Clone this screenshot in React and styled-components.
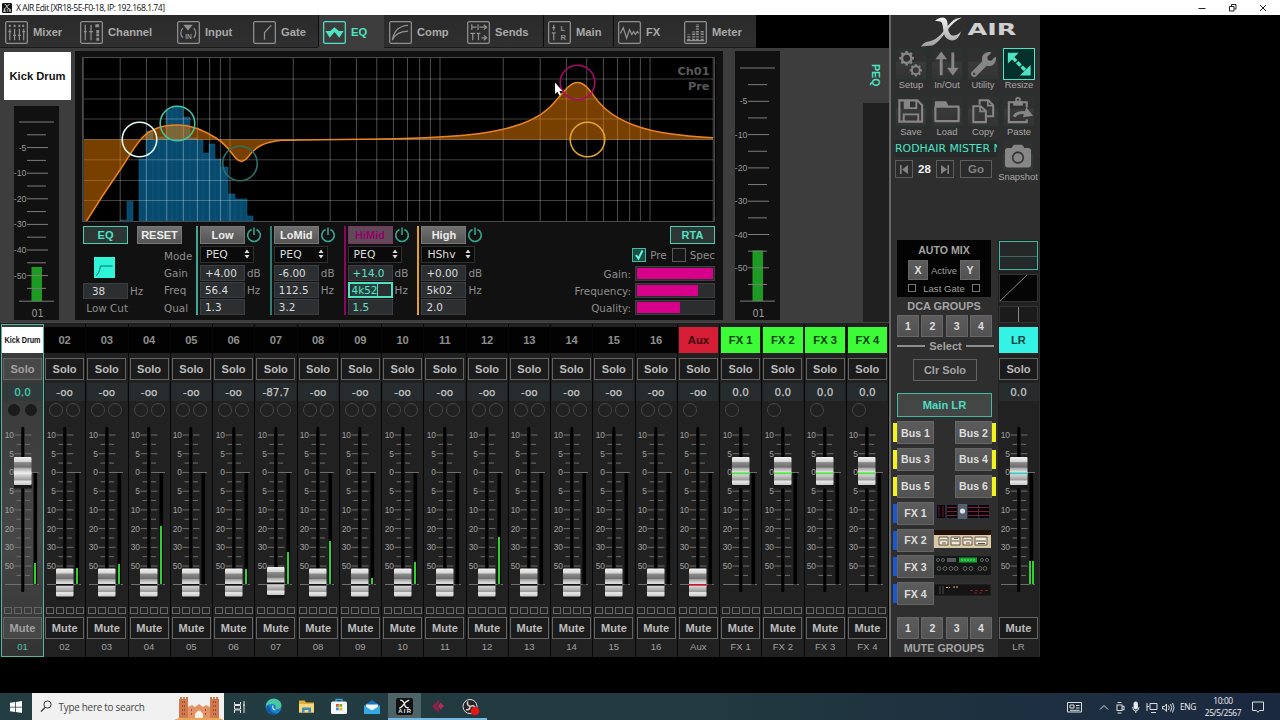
import React from 'react';
import styled, { createGlobalStyle } from 'styled-components';
import { FaWrench, FaCamera } from 'react-icons/fa';

const teal = '#4fe3c4';
const tealDim = '#3aa893';
const magenta = '#d6008a';
const amber = '#e0a030';

const GlobalStyle = createGlobalStyle`
	* {
		box-sizing: border-box;
	}
	body {
		margin: 0;
		background: #000;
		overflow: hidden;
		font-family: 'Liberation Sans', Arial, sans-serif;
	}
	svg {
		display: block;
		flex: none;
	}
`;

/* ---------- data ---------- */

const tabs = [
	{ name: 'Mixer', width: 75 },
	{ name: 'Channel', width: 97 },
	{ name: 'Input', width: 76 },
	{ name: 'Gate', width: 70 },
	{ name: 'EQ', width: 66, active: true },
	{ name: 'Comp', width: 78 },
	{ name: 'Sends', width: 81 },
	{ name: 'Main', width: 70, divided: true },
	{ name: 'FX', width: 66, divided: true },
	{ name: 'Meter', width: 77 },
];

const bands = [
	{ name: 'Low', color: tealDim, mode: 'PEQ', gain: '+4.00', freq: '56.4', qual: '1.3' },
	{ name: 'LoMid', color: '#2c7f72', mode: 'PEQ', gain: '-6.00', freq: '112.5', qual: '3.2' },
	{ name: 'HiMid', color: '#8c0660', mode: 'PEQ', gain: '+14.0', freq: '4k52', qual: '1.5', selected: true },
	{ name: 'High', color: amber, mode: 'HShv', gain: '+0.00', freq: '5k02', qual: '2.0' },
];

const levels = { '01': 563, '02': 568, '03': 564, '04': 526, '06': 569, '07': 552, '08': 541, '09': 578, '10': 562, '12': 537 };

const channels = [...Array(16)].map((_, i) => {
	const id = String(i + 1).padStart(2, '0');
	return { id, name: id, value: '-oo', fader: 167, level: levels[id], dots: 2, cap: '#111' };
});
channels[0] = { ...channels[0], name: 'Kick Drum', value: '0.0', fader: 55.5, selected: true, cap: '#eee' };
channels[6] = { ...channels[6], value: '-87.7', fader: 165.5 };

const strips = [
	...channels,
	{ id: 'Aux', name: 'Aux', value: '-oo', fader: 167, dots: 1, cap: '#c8142c', bg: '#d51d36', fg: '#3b0008' },
	...[1, 2, 3, 4].map((n) => ({
		id: `FX ${n}`,
		name: `FX ${n}`,
		value: '0.0',
		fader: 55.5,
		dots: 1,
		cap: '#48e83c',
		bg: '#3dfb37',
		fg: '#04400a',
	})),
];

/* ---------- window frame ---------- */

const Screen = styled.div`
	width: 1280px;
	height: 720px;
	display: flex;
	flex-direction: column;
	background: #000;
	overflow: hidden;
`;

const TitleBar = styled.div`
	height: 15px;
	flex: none;
	display: flex;
	align-items: center;
	background: #fff;
	padding: 0 13px 0 2px;
	font-family: 'Open Sans', sans-serif;
	font-size: 8.6px;
	letter-spacing: -0.5px;
	color: #111;
	gap: 4px;
	white-space: nowrap;
`;

const WindowButtons = styled.div`
	margin-left: auto;
	display: flex;
	gap: 22.5px;
	align-items: center;
`;

const Mixer = styled.div`
	display: flex;
	width: 1040px;
	height: 642px;
	flex: none;
	background: #2e2e2e;
`;

const MainArea = styled.div`
	width: 889px;
	display: flex;
	flex-direction: column;
	background: #1d1d1d;
`;

/* ---------- tabs ---------- */

const TabBar = styled.div`
	display: flex;
	height: 33px;
	background: #000;
`;

const Tab = styled.div`
	width: ${(p) => p.$width}px;
	display: flex;
	align-items: center;
	gap: 5px;
	padding-left: 5px;
	padding-top: 2px;
	font-size: 11.2px;
	font-weight: bold;
	color: ${(p) => (p.$active ? teal : '#a9a9a9')};
	background: ${(p) => (p.$active ? '#3c3c3c' : 'linear-gradient(#2a2a2a, #2f2f2f)')};
	box-shadow: ${(p) => (p.$divided || p.$active ? 'inset 1px 0 0 #0c0c0c' : 'none')};
	border-bottom: 1px solid ${(p) => (p.$active ? '#3c3c3c' : '#1a1a1a')};
`;

/* ---------- editor panel ---------- */

const Editor = styled.div`
	display: flex;
	height: 274px;
	background: #3d3d3d;
	padding: 3px 0 1px 4px;
`;

const ChannelColumn = styled.div`
	width: 71px;
	display: flex;
	flex-direction: column;
`;

const ChannelName = styled.div`
	width: 67px;
	height: 48px;
	margin-top: 1px;
	background: #fff;
	color: #111;
	display: flex;
	align-items: center;
	justify-content: center;
	font-size: 11.2px;
	font-weight: bold;
`;

const MeterBox = styled.div`
	width: 45px;
	background: #111;
	margin: ${(p) => p.$margin};
	height: ${(p) => p.$height}px;
`;

const EqPanel = styled.div`
	width: 648px;
	height: 269px;
	padding: 6px 0 0 7px;
	background: #111;
	display: flex;
	flex-direction: column;
`;

const Controls = styled.div`
	display: flex;
	margin-top: 4px;
	padding-left: 1px;
	width: 633px;
	font-family: 'DejaVu Sans', Verdana, sans-serif;
	font-size: 10.4px;
	color: #8e8e8e;
`;

const CutColumn = styled.div`
	width: 54px;
	display: flex;
	flex-direction: column;
`;

const PanelButton = styled.div`
	width: 45px;
	height: 18px;
	flex: none;
	display: flex;
	align-items: center;
	justify-content: center;
	font-family: 'Liberation Sans', Arial, sans-serif;
	font-size: 11px;
	font-weight: bold;
	color: ${(p) => (p.$on ? teal : p.$hot ? '#960068' : '#ececec')};
	background: ${(p) => (p.$on ? '#2d3634' : p.$hot ? '#5f4b58' : 'linear-gradient(#707070, #545454)')};
	border: 1px solid ${(p) => (p.$on ? '#52c9b1' : p.$hot ? '#7b3163' : '#777')};
`;

const CutIcon = styled.div`
	width: 21px;
	height: 21px;
	margin: 13px 0 4px 11px;
	background: #2ff5d8;
`;

const FieldRow = styled.div`
	display: flex;
	align-items: center;
	gap: 2px;
	height: 17px;
	white-space: nowrap;
`;

const Field = styled.div`
	width: 45px;
	height: 16px;
	flex: none;
	padding-left: ${(p) => (p.$focus ? 2 : p.$indent || 4)}px;
	line-height: ${(p) => (p.$focus ? 12 : 14)}px;
	background: #2c2f31;
	border: ${(p) => (p.$focus ? `2px solid ${teal}` : '1px solid #3b3e40')};
	color: ${(p) => (p.$hot ? '#5fe0c6' : '#dcdcdc')};
`;

const Selection = styled.span`
	display: inline-block;
	height: 12px;
	background: #26423f;
	border-right: 1px solid ${teal};
`;

const LabelColumn = styled.div`
	width: 59px;
	display: flex;
	flex-direction: column;
`;

const Labels = styled.div`
	padding: 4px 0 0 27px;
	line-height: 17.2px;
	display: flex;
	flex-direction: column;
`;

const Band = styled.div`
	width: 73.8px;
	height: 89px;
	border-left: 2px solid ${(p) => p.$color};
	padding-left: 2px;
	display: flex;
	flex-direction: column;
`;

const BandHead = styled.div`
	display: flex;
	align-items: center;
	gap: 1px;
	height: 18px;
`;

const Select = styled.div`
	width: 54px;
	height: 17px;
	margin: 2px 0;
	padding: 0 3px 0 5px;
	display: flex;
	align-items: center;
	justify-content: space-between;
	background: #0a0a0a;
	border: 1px solid #2f2f2f;
	color: #dedede;
	font-size: 10.8px;
`;

const RtaColumn = styled.div`
	margin-left: auto;
	display: flex;
	flex-direction: column;
	align-items: flex-end;
`;

const CheckRow = styled.div`
	display: flex;
	align-items: center;
	height: 21px;
	gap: 4px;
`;

const CheckBox = styled.div`
	width: 14px;
	height: 14px;
	border: 1px solid ${(p) => (p.$on ? '#49b8a3' : '#5a5a5a')};
	background: ${(p) => (p.$on ? '#1c4d45' : '#161616')};
	margin-left: ${(p) => (p.$on ? 0 : 1)}px;
`;

const BarTrack = styled.div`
	width: 80px;
	height: 15px;
	padding: 1px;
	background: #2b2d2f;
	border: 1px solid #3b3d3f;
	margin-left: 2px;
`;

const BarFill = styled.div`
	height: 100%;
	background: ${magenta};
`;

const SideTabs = styled.div`
	width: 26px;
	margin: -3px 0 -1px auto;
	display: flex;
	flex-direction: column;
`;

const SideTab = styled.div`
	height: 55px;
	padding: 16px 5px 0 0;
	writing-mode: vertical-rl;
	font-size: 10.6px;
	font-weight: bold;
	line-height: 16px;
	color: ${teal};
`;

const SideFill = styled.div`
	flex: 1;
	background: #202020;
`;

/* ---------- channel strips ---------- */

const StripRow = styled.div`
	display: flex;
	height: 335px;
	padding: 1px 0 0 1px;
	border-top: 1px solid #454545;
`;

const Strip = styled.div`
	width: ${(p) => (p.$selected ? 43 : 42.25)}px;
	height: 333px;
	flex: none;
	padding-top: ${(p) => (p.$selected ? 2 : 3)}px;
	display: flex;
	flex-direction: column;
	align-items: center;
	background: ${(p) => (p.$selected ? 'linear-gradient(#3a3a3a 20%, #474747 65%, #333)' : '#212121')};
	border: ${(p) => (p.$selected ? '1px solid #4db8a4' : 'none')};
	border-right: 1px solid ${(p) => (p.$selected ? '#4db8a4' : '#060606')};
`;

const StripName = styled.div`
	width: ${(p) => p.$width || '100%'};
	height: 26px;
	flex: none;
	background: ${(p) => p.$bg || '#020202'};
	color: ${(p) => p.$fg || '#8e8e8e'};
	font-size: 11.2px;
	font-weight: bold;
	display: flex;
	align-items: center;
	justify-content: center;
	white-space: nowrap;
`;

const Narrow = styled.span`
	font-size: 9px;
	transform: scaleX(0.8);
`;

const StripButton = styled.div`
	width: 39px;
	height: 22px;
	flex: none;
	margin-top: ${(p) => p.$top}px;
	display: flex;
	align-items: center;
	justify-content: center;
	font-size: 11.1px;
	font-weight: bold;
	color: ${(p) => (p.$dim ? '#a2a2a2' : '#bdbdbd')};
	border: 1px solid #636363;
	background: ${(p) => (p.$dim ? '#474747' : '#1b1b1b')};
`;

const StripValue = styled.div`
	width: 40px;
	height: 18px;
	flex: none;
	margin-top: 3px;
	display: flex;
	align-items: center;
	justify-content: center;
	background: ${(p) => (p.$on ? '#303a3b' : '#262b2d')};
	color: ${(p) => (p.$on ? '#45cdb3' : '#c4c4c4')};
	-webkit-text-stroke: 0.25px currentColor;
	font-family: 'DejaVu Sans', Verdana, sans-serif;
	font-size: 10.4px;
`;

const Dots = styled.div`
	height: 16px;
	flex: none;
	width: 31px;
	padding-top: 2px;
	display: flex;
	gap: 3px;
`;

const Dot = styled.div`
	width: ${(p) => (p.$on ? 12 : 14)}px;
	height: ${(p) => (p.$on ? 12 : 14)}px;
	margin: ${(p) => (p.$on ? '1px' : 0)};
	border-radius: 50%;
	border: 1px solid ${(p) => (p.$on ? '#1b1b1b' : '#464646')};
	background: ${(p) => (p.$on ? '#1b1b1b' : 'transparent')};
`;

const Squares = styled.div`
	display: flex;
	gap: 2px;
	height: 7px;
	margin-top: 3px;
	flex: none;
`;

const Square = styled.div`
	width: 8px;
	height: 7px;
	border: 1px solid #666;
`;

const StripLabel = styled.div`
	font-size: 9.6px;
	line-height: 16px;
	color: ${(p) => (p.$on ? '#4fc3ae' : '#a0a0a0')};
`;

/* ---------- sidebar ---------- */

const Sidebar = styled.div`
	width: 151px;
	border-left: 2px solid #676767;
	display: flex;
	flex-direction: column;
	background: #2e2e2e;
`;

const SideTop = styled.div`
	height: 225px;
	display: flex;
	flex-direction: column;
	padding: 2px 0 0 2px;
`;

const ToolGrid = styled.div`
	display: grid;
	grid-template-columns: repeat(4, 36px);
	row-gap: 2px;
`;

const Tool = styled.div`
	display: flex;
	flex-direction: column;
	align-items: center;
	width: 36px;
	height: 45px;
	font-size: 9.4px;
	line-height: 10px;
	color: #a8a8a8;
	white-space: nowrap;
`;

const ToolIcon = styled.div`
	width: 32px;
	height: 32px;
	flex: none;
	display: flex;
	align-items: center;
	justify-content: center;
	color: ${(p) => (p.$active ? teal : '#868686')};
	background: ${(p) => (p.$active ? '#04302b' : 'linear-gradient(#303030 40%, #393939 45%, #333)')};
	border: 1px solid ${(p) => (p.$active ? teal : '#24352f')};
`;

const SceneArea = styled.div`
	display: flex;
	justify-content: space-between;
	width: 143px;
	padding-left: 2px;
`;

const SceneLeft = styled.div`
	width: 103px;
	display: flex;
	flex-direction: column;
`;

const SceneName = styled.div`
	height: 17px;
	width: 102px;
	overflow: hidden;
	white-space: nowrap;
	font-family: 'DejaVu Sans', Verdana, sans-serif;
	font-size: 10.9px;
	line-height: 17px;
	color: ${teal};
	background: #262a2a;
`;

const SceneRow = styled.div`
	display: flex;
	align-items: center;
	margin-top: 3px;
	font-size: 11.5px;
	font-weight: bold;
	color: #f4f4f4;
`;

const SceneButton = styled.div`
	width: ${(p) => p.$width}px;
	height: 18px;
	margin-right: ${(p) => p.$gap || 0}px;
	border: 1px solid #5d5d5d;
	background: #2b2b2b;
	color: #838383;
	display: flex;
	align-items: center;
	justify-content: center;
`;

const SceneNumber = styled.div`
	width: 23px;
	text-align: center;
`;

const SideBottom = styled.div`
	display: flex;
	height: 417px;
`;

const Groups = styled.div`
	width: 107px;
	display: flex;
	flex-direction: column;
	padding-left: 2px;
`;

const AutoMix = styled.div`
	width: 94px;
	height: 57px;
	margin-left: 4px;
	background: #030303;
	display: flex;
	flex-direction: column;
	align-items: center;
`;

const Heading = styled.div`
	width: 102px;
	text-align: center;
	font-size: ${(p) => p.$size || 10.9}px;
	font-weight: bold;
	line-height: ${(p) => p.$line || 18}px;
	color: #a4a4a4;
`;

const AutoRow = styled.div`
	display: flex;
	align-items: center;
	justify-content: space-between;
	width: 72px;
	height: ${(p) => p.$height}px;
	font-size: 9.6px;
	color: #a0a0a0;
`;

const SmallBox = styled.div`
	width: 8px;
	height: 8px;
	border: 1px solid #757575;
`;

const GroupButton = styled.div`
	width: ${(p) => p.$width || 22}px;
	height: ${(p) => p.$height || 22}px;
	display: flex;
	align-items: center;
	justify-content: center;
	font-size: 10.6px;
	font-weight: bold;
	color: #dedede;
	background: linear-gradient(#5c5c5c, #525252);
	border: 1px solid #666;
`;

const GroupRow = styled.div`
	display: flex;
	justify-content: space-between;
	width: 95px;
	margin-left: 4px;
`;

const SelectLine = styled.div`
	display: flex;
	align-items: center;
	justify-content: space-between;
	width: 97px;
	height: 18px;
	margin-left: 4px;
	font-size: 11px;
	font-weight: bold;
	color: #a4a4a4;

	&::before,
	&::after {
		content: '';
		width: 28px;
		height: 2px;
		background: #8e8e8e;
	}
`;

const ClearSolo = styled.div`
	width: 64px;
	height: 22px;
	margin: 4px 0 12px 20px;
	border: 1px solid #626262;
	color: #a2a2a2;
	font-size: 11px;
	font-weight: bold;
	display: flex;
	align-items: center;
	justify-content: center;
`;

const MainLr = styled.div`
	width: 95px;
	height: 24px;
	margin: 0 0 4px 4px;
	border: 1px solid #45b7a1;
	background: #424645;
	color: #4fdcc0;
	font-size: 11.2px;
	font-weight: bold;
	display: flex;
	align-items: center;
	justify-content: center;
`;

const BusRow = styled.div`
	display: flex;
	width: 103px;
	height: 26.9px;
	align-items: flex-start;
`;

const Marker = styled.div`
	width: 4px;
	height: 19px;
	margin-top: 2px;
	background: ${(p) => p.$color};
`;

const RackDrawing = styled.svg`
	margin-top: 1px;
`;

const Gap = styled.div`
	flex: 1;
`;

const MasterStrip = styled.div`
	width: 41px;
	height: 417px;
	background: #212121;
	display: flex;
	flex-direction: column;
	align-items: center;
	padding-top: 1px;
`;

const Thumb = styled.div`
	width: 39px;
	height: ${(p) => p.$height}px;
	margin-bottom: ${(p) => p.$gap}px;
	flex: none;
	overflow: hidden;
	background: ${(p) => p.$bg || '#050505'};
	border: 1px solid ${(p) => p.$line || '#333'};
`;

/* ---------- taskbar ---------- */

const Taskbar = styled.div`
	margin-top: auto;
	height: 27px;
	display: flex;
	align-items: center;
	background: linear-gradient(90deg, #233d42 0%, #21393f 55%, #1d3040 78%, #1b2940 100%);
`;

const StartButton = styled.div`
	width: 32px;
	display: flex;
	justify-content: center;
`;

const Search = styled.div`
	width: 192px;
	height: 27px;
	background: #f1f1f1;
	display: flex;
	align-items: center;
	padding: 0 0 0 8px;
	gap: 6.5px;
	font-family: 'Open Sans', sans-serif;
	font-size: 9.9px;
	letter-spacing: -0.25px;
	color: #444;
	white-space: nowrap;
`;

const Castle = styled.svg`
	margin-left: auto;
	margin-top: 3px;
`;

const TaskItem = styled.div`
	width: 32.9px;
	height: 27px;
	display: flex;
	align-items: center;
	justify-content: center;
	background: ${(p) => (p.$active ? '#4c6468' : 'transparent')};
	box-shadow: ${(p) => (p.$open ? 'inset 0 -2px 0 #78b8e0' : 'none')};
`;

const Tray = styled.div`
	margin-left: auto;
	padding-right: 16px;
	display: flex;
	align-items: center;
	font-family: 'Open Sans', sans-serif;
	font-size: 8.4px;
	color: #eee;
`;

const Language = styled.div`
	width: 18px;
	margin: 0 3px 0 4px;
	letter-spacing: -0.3px;
`;

const Clock = styled.div`
	width: 44px;
	margin-right: 7px;
	text-align: center;
	line-height: 12px;
	letter-spacing: -0.35px;
`;

/* ---------- drawings ---------- */

const tabIcons = {
	Mixer: (
		<>
			<path d='M4 5h2M9 5h2M14 5h2M18 5h2' strokeWidth='2.4' />
			<path d='M5 8v12M10 8v12M15 8v12M19.500 8v12M3.500 11h3M8.500 15h3M13.500 15h3M18 11h3' />
		</>
	),
	Channel: (
		<>
			<path d='M5.500 4v16M11.500 4v16M4 11h3M9.500 11h4' />
			<path d='M16 5h4M17 11h3M17 14.500h3M17 19h3' strokeWidth='3' />
		</>
	),
	Input: (
		<>
			<path d='M6.500 4h10l-5 6z' fill='currentColor' stroke='none' />
			<path d='M6 7.500q-4 5 0 10M17.500 7.500q4 5 0 10' />
			<text x='12' y='19' fontSize='7' fontWeight='bold' textAnchor='middle' fill='currentColor' stroke='none'>IN</text>
		</>
	),
	Gate: <path d='M12 19.500V12L19 4.500' />,
	EQ: <path d='M2.500 10.500h5L12 6.500l4.500 4h5L17 17.500l-5-6-5 6z' fill='currentColor' stroke='none' />,
	Comp: <path d='M3.500 20Q6 5 20 4.500M3.500 20Q7 11 20 10.500' />,
	Sends: (
		<path d='M5 3.500v6M5 6.500h5M11.500 3.500v6M13 6.500h7M17.500 4l3 2.500-3 2.500M3.500 13h5M6 13v7M10 13h4M12 13v7M15 17.500h5M17.500 15l3 2.500-3 2.500' />
	),
	Main: (
		<>
			<path d='M6 4v6M6 12v8M4 12.500h4M4.500 7h3' />
			<text x='15.500' y='10.500' fontSize='8' fontWeight='bold' textAnchor='middle' fill='currentColor' stroke='none'>L</text>
			<text x='16' y='20' fontSize='8' fontWeight='bold' textAnchor='middle' fill='currentColor' stroke='none'>R</text>
		</>
	),
	FX: <path d='M2.500 13l3-6 3.500 11 3-9 2.500 5 1.800-3 1.800 3 2-3 1.500 2' />,
	Meter: (
		<>
			<path d='M5 20v-6M10 20V11M14 20V3.500M19 20V9' strokeWidth='3.200' strokeDasharray='1.500 1.200' />
			<path d='M3 20.500h18' />
		</>
	),
};

function TabIcon({ name }) {
	return (
		<svg width='23' height='23' viewBox='0 0 24 24' fill='none' stroke='currentColor' strokeWidth='1.300' opacity={name === 'EQ' ? 1 : 0.8}>
			<rect x='0.700' y='0.700' width='22.600' height='22.600' rx='1.500' />
			{tabIcons[name]}
		</svg>
	);
}

function LevelMeter({ height, top, step, level }) {
	const bottom = top + step * 14;
	const marks = ['', '', '-5', '', '-10', '', '-20', '', '-30', '', '-40', '', '-50', ''];
	return (
		<svg width='45' height={height} fontFamily='Liberation Sans' fontSize='8.800' fill='#999'>
			<rect x='17.500' y={level} width='10.500' height={bottom - level} fill='#1c9a22' />
			{marks.map((mark, i) => {
				const y = top + step * i;
				const x1 = i === 0 ? 5 : 13;
				const x2 = i === 0 ? 40 : mark ? 34 : 32;
				return (
					<g key={i}>
						<path d={`M${x1} ${y}H${x2}`} stroke='#7c7c7c' />
						<text x='12.500' y={y + 3} textAnchor='end'>{mark}</text>
					</g>
				);
			})}
			<path d={`M5 ${bottom}H40`} stroke='#7c7c7c' />
			<text x='23.500' y={height - 3.5} fontFamily='DejaVu Sans' fontSize='9.600' textAnchor='middle'>01</text>
		</svg>
	);
}

const curve =
	'M86 222 C97 204 106 190 120 170 C127 160 133 148 142 138 C150 129 163 125 178 125 C192 125 205 131 216 138 C224 143 229 149 234 156 C239 162.500 243 163 248 157 C255 147 264 142 282 140.300 C300 139.500 340 139.500 380 139 C410 138.500 450 137.500 480 133.500 C510 129.500 535 121 549 108 C560 98 568 82.500 577.500 82.500 C587 82.500 592 95 600 103.500 C612 117 630 127 663 132.800 C680 135.500 700 137.300 713 137.700';

const rtaBars = [
	[120, 7, 220], [127, 6, 201.5], [139, 7, 159], [146, 7, 131], [153, 6, 140], [159, 7, 137], [166, 6, 110], [172, 5, 106],
	[177, 6, 107], [183, 7, 117], [190, 7, 138], [197, 6, 140], [203, 6, 153], [209, 6, 144], [215, 6, 159],
	[221, 7, 167], [228, 7, 194], [235, 6, 199], [241, 6, 199], [247, 6, 216],
];

function EqGraph() {
	const lines = [30, 40, 50, 60, 70, 80, 90, 100];
	[100, 1000].forEach((decade) => {
		for (let n = 2; n <= 10; n++) lines.push(decade * n);
	});
	lines.push(20000);
	return (
		<svg width='634' height='165' viewBox='82 57 634 165'>
			<rect x='82' y='57' width='634' height='165' fill='#000' />
			{rtaBars.map(([x, w, y]) => (
				<rect key={x} x={x} y={y} width={w} height={221 - y} fill='#084a6e' stroke='#0e5980' strokeWidth='0.600' />
			))}
			{lines.map((f) => (
				<path key={f} d={`M${230 + 210 * Math.log10(f / 100)} 58V221`} stroke='#fff' strokeOpacity='0.3' />
			))}
			{[79, 99, 119, 139.5, 159.8, 180.5, 200.5].map((y) => (
				<path key={y} d={`M84 ${y}H713`} stroke='#fff' strokeOpacity={y === 139.5 ? 0.35 : 0.25} />
			))}
			<path d={`${curve} V139.500 H83 V222 Z`} fill='#f08000' fillOpacity='0.5' />
			<path d={curve} fill='none' stroke='#e98525' strokeWidth='1.500' />
			<rect x='82.500' y='57.500' width='632' height='164' fill='none' stroke='#4a4a4a' />
			<path d='M83.500 58V221' stroke='#3b3b3b' />
			<g fill='none' strokeWidth='1.600'>
				<circle cx='139.500' cy='139.500' r='17.300' stroke='#dffcf4' />
				<circle cx='177.500' cy='123.500' r='17.300' stroke='#3fc4a0' />
				<circle cx='240' cy='163.500' r='17.300' stroke='#2b6f68' />
				<circle cx='577.500' cy='82.500' r='17.300' stroke='#ac0868' />
				<circle cx='587.500' cy='139.500' r='17.300' stroke='#e5a32f' />
			</g>
			<g fontFamily='DejaVu Sans' fontWeight='bold' fontSize='11.300' fill='#585858' textAnchor='end'>
				<text x='709.500' y='74.500'>Ch01</text>
				<text x='709.500' y='90'>Pre</text>
			</g>
			<path d='M555 82.500v11.500l2.500-2.200 1.800 3.700 1.800-.900-1.700-3.500h3z' fill='#fff' />
		</svg>
	);
}

function PowerIcon() {
	return (
		<svg width='16' height='16' viewBox='0 0 16 16' fill='none' stroke='#36a18c' strokeWidth='1.600'>
			<path d='M5.600 2.400A6.300 6.300 0 1 0 10.400 2.400M8 0.500V8' />
		</svg>
	);
}

function Fader({ y, level, cap, stereo }) {
	const labels = ['10', '5', '0', '5', '10', '20', '30', '50'];
	return (
		<svg width='42' height='187' fontFamily='Liberation Sans' fontSize='8.400' fill='#a0a0a0'>
			<defs>
				<linearGradient id='knob' x1='0' x2='0' y1='0' y2='1'>
					<stop offset='0' stopColor='#f2f2f2' />
					<stop offset='0.160' stopColor='#d6d6d6' />
					<stop offset='0.200' stopColor='#8a8a8a' />
					<stop offset='0.360' stopColor='#6f6f6f' />
					<stop offset='0.400' stopColor='#a8a8a8' />
					<stop offset='0.520' stopColor='#dcdcdc' />
					<stop offset='0.640' stopColor='#d2d2d2' />
					<stop offset='0.820' stopColor='#9a9a9a' />
					<stop offset='0.860' stopColor='#e9e9e9' />
					<stop offset='1' stopColor='#c9c9c9' />
				</linearGradient>
			</defs>
			{[...Array(16)].map((_, i) => {
				const ty = 18 + i * 9.36;
				return (
					<g key={i}>
						<path d={`M${i % 2 ? 14.5 : 12.5} ${ty}H19M23 ${ty}h${i % 2 ? 5 : 6.5}`} stroke='#6e6e6e' />
						{i % 2 === 0 && <text x='12' y={ty + 3} textAnchor='end'>{labels[i / 2]}</text>}
					</g>
				);
			})}
			<path d='M24 55.500H37M3 167.500H37' stroke='#6e6e6e' />
			<rect x='31.500' y='56' width='3.600' height='111.500' fill='#000' />
			<rect x='19.300' y='10' width='3' height='165' rx='1' fill='#000' />
			{level && <rect x={stereo ? 31 : 32} y={level - 417} width='2' height={584 - level} fill='#2fd32f' />}
			{level && stereo && <rect x='34' y={level - 417} width='2' height={584 - level} fill='#2fd32f' />}
			<rect x='12' y={y + 12} width='18' height='4' fill='#181818' />
			<rect x='12' y={y - 15.5} width='17.500' height='28' rx='1' fill='url(#knob)' />
			<rect x='12' y={y} width='17.500' height='1.700' fill={cap} />
		</svg>
	);
}

function Gear({ x, y, r }) {
	return (
		<g transform={`translate(${x} ${y})`}>
			<circle r={r} strokeWidth={r * 0.5} />
			{[0, 45, 90, 135, 180, 225, 270, 315].map((a) => (
				<path key={a} d={`M0 ${-r}V${-r * 1.55}`} strokeWidth={r * 0.52} transform={`rotate(${a})`} />
			))}
		</g>
	);
}

const toolDrawings = {
	Setup: (
		<>
			<Gear x={11} y={9.5} r={4.9} />
			<Gear x={20.5} y={22} r={4.1} />
		</>
	),
	'In/Out': (
		<>
			<path d='M9.500 27V8M21.500 3.500V22' strokeWidth='3' />
			<path d='M3.500 10.500l6-8 6 8zM15.500 19.500l6 8 6-8z' fill='currentColor' stroke='none' />
		</>
	),
	Resize: (
		<>
			<path d='M9 9l13 13' strokeWidth='3.500' strokeDasharray='5 1.500' />
			<path d='M4 4h11L4 15zM27.500 27.500h-11l11-11z' fill='currentColor' stroke='none' />
		</>
	),
	Save: (
		<>
			<path d='M5 4.500h17l5 5v17H3.500V4.500z' strokeWidth='2.200' />
			<path d='M9 4.500v8h12v-8M8 26v-7h15v7' strokeWidth='2' />
			<path d='M9.500 5h5v7h-5z' fill='currentColor' stroke='none' />
		</>
	),
	Load: (
		<>
			<path d='M3.500 11h24v15h-24zM4 11V6.500h10l2 4' strokeWidth='2.200' strokeLinejoin='round' />
			<path d='M4 6h10l2 4.500H4z' fill='currentColor' stroke='none' />
		</>
	),
	Copy: (
		<>
			<path d='M12 9V4.500h9l5 5V21h-7' strokeWidth='2.100' />
			<path d='M5.500 10.500h7.500l5.500 5V27h-13z' strokeWidth='2.100' />
			<path d='M12.500 10.500v5.500h6M20.500 4.500V10H26' strokeWidth='1.800' />
		</>
	),
	Paste: (
		<>
			<path d='M23.500 12V6.500H5V27h18.500v-3' strokeWidth='2.200' />
			<path d='M9.500 5.500h10v4.500h-10z' fill='currentColor' stroke='none' />
			<circle cx='14.500' cy='4' r='2' strokeWidth='1.700' />
			<path d='M10.500 21.500q3-6 13-4' strokeWidth='3.200' />
			<path d='M23 11.500L30 20.500l-10.500 1.500z' fill='currentColor' stroke='none' />
		</>
	),
};

function ToolButton({ name }) {
	return (
		<Tool>
			<ToolIcon $active={name === 'Resize'}>
				{name === 'Utility' && <FaWrench size={25} />}
				{name === 'Snapshot' && <FaCamera size={26} />}
				{toolDrawings[name] && (
					<svg width='30' height='30' viewBox='0 0 31 31' fill='none' stroke='currentColor'>
						{toolDrawings[name]}
					</svg>
				)}
			</ToolIcon>
			{name}
		</Tool>
	);
}

function Logo() {
	return (
		<svg width='143' height='31' viewBox='893 17 143 31'>
			<defs>
				<linearGradient id='chrome' gradientUnits='userSpaceOnUse' x1='0' x2='0' y1='17' y2='47'>
					<stop offset='0' stopColor='#f4f4f4' />
					<stop offset='1' stopColor='#9c9c9c' />
				</linearGradient>
			</defs>
			<path d='M935 21q3-3.500 8-3.500 4 .5 4.500 5.500 0 12 5.500 12.500 4 .5 8-4-2.500 9-9 9-7-.5-8.500-8.500-.5-6-1.500-9-1.500-2.500-7-2z' fill='url(#chrome)' />
			<path d='M962 17.500l-6 1.200q-5 2.300-12 12-7 10-18 11.300-4 2-5 4.500 6-.5 11.500-1 5.500-2.500 13-13 7.500-11 16.500-15z' fill='url(#chrome)' />
			<text x='967.500' y='34.700' fontFamily='DejaVu Sans' fontWeight='bold' fontSize='15' textLength='49' lengthAdjust='spacingAndGlyphs' fill='#d0d0d0'>AIR</text>
		</svg>
	);
}

function FxRack({ index }) {
	return (
		<RackDrawing width='57' height='19'>
			{index === 1 && (
				<>
					<rect width='57' height='17' fill='#2b2d37' />
					<path d='M3 2h8v13H3zM13 2h10v13H13zM34 2h10v13H34zM45 2h10v13H45z' fill='#0b0609' />
					<path d='M5 3v11M9 3v11' stroke='#651b2e' strokeWidth='1' />
					<path d='M13 4.500h10M13 8.500h10M13 12.500h10M34 4.500h21M34 8.500h21M34 12.500h21' stroke='#7b2036' />
					<rect x='24' y='1' width='9' height='15' fill='#555e6b' />
					<circle cx='28.500' cy='8' r='2.600' fill='#d9e3ec' />
				</>
			)}
			{index === 2 && (
				<>
					<rect width='57' height='18' fill='#d9caa8' />
					<rect width='57' height='5' fill='#231009' />
					<path d='M5 7h9v8H5zM17 7h9v8h-9zM29 7h9v8h-9zM41 7h12v8H41z' fill='#f1ead8' stroke='#62574a' />
					<path d='M6 10h7M18 11h7M30 10h7M42 11h10M8 13h4M20 8.500h4M32 13h4M44 13.500h7' stroke='#5a5045' />
				</>
			)}
			{index === 3 && (
				<>
					<rect width='57' height='19' fill='#151616' />
					<rect x='13' y='2' width='9' height='4' fill='#55585a' />
					<rect x='25' y='1.500' width='18' height='5' fill='#16a334' />
					<path d='M27 4h14' stroke='#62e36f' strokeDasharray='2 1' />
					<g fill='none' stroke='#777' strokeWidth='0.800'>
						{[5, 11, 17, 22, 31, 37, 46, 51].map((x) => <circle key={x} cx={x} cy='12.500' r='1.900' />)}
						{[4, 9, 48, 53].map((x) => <circle key={x} cx={x} cy='4' r='1.500' />)}
					</g>
				</>
			)}
			{index === 4 && (
				<>
					<rect width='57' height='12' y='1' fill='#151313' stroke='#3b3b3b' strokeWidth='0.600' />
					<path d='M6 3v8M9 3v8' stroke='#4e4e4e' />
					<path d='M12 4.500h4M19 4h5' stroke='#d7b15b' strokeDasharray='2 1' />
					<path d='M36 7.500h18M40 10h10' stroke='#73241d' strokeDasharray='3 2' />
				</>
			)}
		</RackDrawing>
	);
}

function ChannelStrip({ strip }) {
	const { selected } = strip;
	return (
		<Strip $selected={selected}>
			<StripName
				$bg={selected ? '#fff' : strip.bg}
				$fg={selected ? '#111' : strip.fg}
				$width={strip.bg ? '39.500px' : undefined}
			>
				{selected ? <Narrow>{strip.name}</Narrow> : strip.name}
			</StripName>
			<StripButton $top={5} $dim={selected}>Solo</StripButton>
			<StripValue $on={selected}>{strip.value}</StripValue>
			<Dots>
				{[...Array(strip.dots)].map((_, i) => <Dot key={i} $on={selected} />)}
			</Dots>
			<Fader y={strip.fader} level={strip.level} cap={strip.cap} />
			<Squares>
				{[0, 1, 2, 3].map((i) => <Square key={i} />)}
			</Squares>
			<StripButton $top={3} $dim={selected}>Mute</StripButton>
			<StripLabel $on={selected}>{strip.id}</StripLabel>
		</Strip>
	);
}

function EqControls() {
	return (
		<Controls>
			<CutColumn>
				<PanelButton $on>EQ</PanelButton>
				<CutIcon>
					<svg width='21' height='21' fill='none' stroke='#087062'>
						<path d='M2 18.500q3-1 4.500-9.500h12' />
					</svg>
				</CutIcon>
				<FieldRow>
					<Field $indent={8}>38</Field>Hz
				</FieldRow>
				<FieldRow>&nbsp;Low Cut</FieldRow>
			</CutColumn>
			<LabelColumn>
				<PanelButton>RESET</PanelButton>
				<Labels>
					<span>Mode</span>
					<span>Gain</span>
					<span>Freq</span>
					<span>Qual</span>
				</Labels>
			</LabelColumn>
			{bands.map((band) => (
				<Band key={band.name} $color={band.color}>
					<BandHead>
						<PanelButton $hot={band.selected}>{band.name}</PanelButton>
						<PowerIcon />
					</BandHead>
					<Select>
						{band.mode}
						<svg width='6' height='10' fill='#ddd'>
							<path d='M0.500 4L3 0.500 5.500 4zM0.500 6h5L3 9.500z' />
						</svg>
					</Select>
					<FieldRow>
						<Field $hot={band.selected}>{band.gain}</Field>dB
					</FieldRow>
					<FieldRow>
						<Field $hot={band.selected} $focus={band.selected}>
							{band.selected ? <Selection>{band.freq}</Selection> : band.freq}
						</Field>
						Hz
					</FieldRow>
					<FieldRow>
						<Field $hot={band.selected}>{band.qual}</Field>
					</FieldRow>
				</Band>
			))}
			<RtaColumn>
				<PanelButton $on>RTA</PanelButton>
				<CheckRow>
					<CheckBox $on>
						<svg width='12' height='12' fill='none' stroke='#6cf5da' strokeWidth='2'>
							<path d='M3 6l2.500 3.500L9.500 1.500' />
						</svg>
					</CheckBox>
					Pre
					<CheckBox />
					Spec
				</CheckRow>
				{[['Gain:', 76], ['Frequency:', 61], ['Quality:', 43]].map(([label, width]) => (
					<FieldRow key={label}>
						{label}
						<BarTrack>
							<BarFill style={{ width }} />
						</BarTrack>
					</FieldRow>
				))}
			</RtaColumn>
		</Controls>
	);
}

function SidePanel() {
	return (
		<Sidebar>
			<SideTop>
				<Logo />
				<ToolGrid>
					{['Setup', 'In/Out', 'Utility', 'Resize', 'Save', 'Load', 'Copy', 'Paste'].map((name) => (
						<ToolButton key={name} name={name} />
					))}
				</ToolGrid>
				<SceneArea>
					<SceneLeft>
						<SceneName>RODHAIR MISTER N</SceneName>
						<SceneRow>
							<SceneButton $width={18}>
								<svg width='10' height='9' fill='currentColor'><path d='M1 0h1.600v9H1zM9 0v9L3 4.500z' /></svg>
							</SceneButton>
							<SceneNumber>28</SceneNumber>
							<SceneButton $width={18} $gap={6}>
								<svg width='10' height='9' fill='currentColor'><path d='M7.400 0H9v9H7.400zM1 0v9l6-4.500z' /></svg>
							</SceneButton>
							<SceneButton $width={32}>Go</SceneButton>
						</SceneRow>
					</SceneLeft>
					<ToolButton name='Snapshot' />
				</SceneArea>
			</SideTop>
			<SideBottom>
				<Groups>
					<AutoMix>
						<Heading $size={10.6} $line={20}>AUTO MIX</Heading>
						<AutoRow $height={20}>
							<GroupButton $width={20} $height={20}>X</GroupButton>
							Active
							<GroupButton $width={20} $height={20}>Y</GroupButton>
						</AutoRow>
						<AutoRow $height={16}>
							<SmallBox />
							Last Gate
							<SmallBox />
						</AutoRow>
					</AutoMix>
					<Heading>DCA GROUPS</Heading>
					<GroupRow>
						{[1, 2, 3, 4].map((n) => <GroupButton key={n}>{n}</GroupButton>)}
					</GroupRow>
					<SelectLine>Select</SelectLine>
					<ClearSolo>Clr Solo</ClearSolo>
					<MainLr>Main LR</MainLr>
					{[1, 3, 5].map((n) => (
						<BusRow key={n}>
							<Marker $color='#f2f21c' />
							<GroupButton $width={37} $height={23}>Bus {n}</GroupButton>
							<Gap />
							<GroupButton $width={37} $height={23}>Bus {n + 1}</GroupButton>
							<Marker $color='#f2f21c' />
						</BusRow>
					))}
					{[1, 2, 3, 4].map((n) => (
						<BusRow key={n}>
							<Marker $color='#1b57cf' />
							<GroupButton $width={37} $height={23}>FX {n}</GroupButton>
							<FxRack index={n} />
						</BusRow>
					))}
					<Gap />
					<GroupRow>
						{[1, 2, 3, 4].map((n) => <GroupButton key={n}>{n}</GroupButton>)}
					</GroupRow>
					<Heading $size={10.8}>MUTE GROUPS</Heading>
				</Groups>
				<MasterStrip>
					<Thumb $height={29} $gap={4} $line='#47b5a0' $bg='#242828'>
						<svg width='37' height='27' stroke='#3d6a62'><path d='M0 14.500h37' /></svg>
					</Thumb>
					<Thumb $height={28} $gap={4}>
						<svg width='37' height='26' stroke='#888'><path d='M0 26L27 0' /></svg>
					</Thumb>
					<Thumb $height={17} $gap={4} $bg='#1b1b1b'>
						<svg width='37' height='15' stroke='#888'><path d='M18.500 0v15' strokeWidth='1' /></svg>
					</Thumb>
					<StripName $bg='#34f3e4' $fg='#08403c' $width='39px'>LR</StripName>
					<StripButton $top={5}>Solo</StripButton>
					<StripValue>0.0</StripValue>
					<Dots />
					<Fader y={55.5} level={561} cap='#35cfc8' stereo />
					<StripButton $top={13}>Mute</StripButton>
					<StripLabel>LR</StripLabel>
				</MasterStrip>
			</SideBottom>
		</Sidebar>
	);
}

function XAirMark({ size }) {
	return (
		<svg width={size} height={size} viewBox='0 0 16 16'>
			<rect width='16' height='16' rx='2' fill='#111' />
			<path d='M4 2q3 0 4 4t4 3M12.500 2Q9 3 6.500 7 5 9.500 3 9.500' fill='none' stroke='#eee' strokeWidth='1.300' />
			<text x='8' y='14.500' fontSize='5.500' fontWeight='bold' textAnchor='middle' textLength='12' fill='#eee'>AIR</text>
		</svg>
	);
}

function WindowsTaskbar() {
	return (
		<Taskbar>
			<StartButton>
				<svg width='12' height='12' fill='#fff'>
					<path d='M0 1.800L5.200 1v4.700H0zM6 .900L12 0v5.700H6zM0 6.400h5.200V11L0 10.200zM6 6.400h6V12l-6-.900z' />
				</svg>
			</StartButton>
			<Search>
				<svg width='12' height='13' fill='none' stroke='#333'>
					<circle cx='7.500' cy='4.500' r='3.600' />
					<path d='M5 7.500L1 11.500' strokeWidth='1.200' />
				</svg>
				Type here to search
				<Castle width='50' height='24' viewBox='0 0 50 24'>
					<path d='M0 24q10-5 25-3 15-2 25 3z' fill='#e8a55c' />
					<path d='M6 1h2v2h1V1h2v2h1V1h2v21H5V3h1zM36 1h2v2h1V1h2v2h1V1h2v2h1v19H36z' fill='#d1784d' />
					<path d='M14 11l4-2 3 2 4-3 4 3 3-2 4 2v11H14z' fill='#e29468' />
					<path d='M21 22v-4q4-7 8 0v4z' fill='#fff4e4' />
					<path d='M8 6h3M8 10h3M8 14h3M8 18h3M39 6h3M39 10h3M39 14h3M39 18h3M17 14h2M31 14h2M17 18h2M31 18h2' stroke='#873d2b' strokeWidth='1.500' strokeDasharray='1 1' />
				</Castle>
			</Search>
			<TaskItem>
				<svg width='12' height='12' fill='none' stroke='#e6e6e6'>
					<path d='M0.500 1v2.500h6V1M0.500 12V9h6v3M0.500 4.500h6v3.500h-6zM10 0v12M9 4h2' />
				</svg>
			</TaskItem>
			<TaskItem>
				<svg width='17' height='17' viewBox='0 0 17 17'>
					<circle cx='8.500' cy='8.500' r='8' fill='#1b7fd0' />
					<path d='M1 6q3-6 9-5.300 6.500 1.300 6.500 7-1 4-6 3.300 1.500-4-2.500-5Q4 5.500 1 8z' fill='#4ac6a0' />
					<path d='M5.500 9q-1 6 6 6.500Q5 18 2 13 0 9 4 6.500q-2 4 1.500 2.500z' fill='#145aa3' />
					<path d='M8 7.500q-1.500 3.500 2.500 4.500' fill='none' stroke='#bfe3ee' strokeWidth='1.200' />
				</svg>
			</TaskItem>
			<TaskItem>
				<svg width='15' height='13'>
					<path d='M0 0.500h5.500l1.500 2H15V12.500H0z' fill='#e3ae36' />
					<path d='M0 4h15v8.500H0z' fill='#f8d775' />
					<path d='M3 7.500h9v5H9.500V10h-4v2.500H3z' fill='#3d8cc8' />
				</svg>
			</TaskItem>
			<TaskItem>
				<svg width='16' height='17'>
					<path d='M5 4V1.500h6V4' fill='none' stroke='#3ba4dd' strokeWidth='1.300' />
					<rect y='3.500' width='16' height='12.500' rx='1.500' fill='#f4f6f7' />
					<rect x='5' y='6' width='2.800' height='2.800' fill='#e2512a' />
					<rect x='8.400' y='6' width='2.800' height='2.800' fill='#78b424' />
					<rect x='5' y='9.500' width='2.800' height='2.800' fill='#2a9be0' />
					<rect x='8.400' y='9.500' width='2.800' height='2.800' fill='#f0b31d' />
				</svg>
			</TaskItem>
			<TaskItem>
				<svg width='16' height='14'>
					<path d='M0 5.500L8 0l8 5.500V14H0z' fill='#1972b8' />
					<path d='M2 4.500h12v6H2z' fill='#eef6fa' />
					<path d='M0 5.500l8 5 8-5V14H0z' fill='#35a9e3' />
				</svg>
			</TaskItem>
			<TaskItem $active $open><XAirMark size={17} /></TaskItem>
			<TaskItem $open>
				<svg width='14' height='15'>
					<path d='M8 0.500v4L5.500 7 8 9.500v4.500L1 7.500z' fill='#8e2149' />
					<path d='M9.500 3.500L13 7l-3.500 3.500L7 7z' fill='#b42a5b' />
				</svg>
			</TaskItem>
			<TaskItem $open>
				<svg width='18' height='18'>
					<circle cx='8' cy='8.500' r='7' fill='#242424' stroke='#ddd' />
					<path d='M8 8.500q-4-2-2-5M8 8.500q4-2 5 1M8 8.500q0 4-4 3' stroke='#ccc' strokeWidth='1.600' fill='none' />
					<circle cx='13' cy='13' r='4.300' fill='#e81313' />
				</svg>
			</TaskItem>
			<Tray>
				<svg width='110' height='16' viewBox='1068 698 110 16' fill='none' stroke='#ddd'>
					<path d='M1069.500 701.500h14v9.500h-14zM1072 704h4v3h-4zM1078 704.500h3.500M1078 707h3.500M1072 709.300h9.500' />
					<path d='M1102 708.500l4-4 4 4' />
					<rect x='1119' y='704' width='5' height='5.500' />
					<path d='M1124 706l2-1v4l-2-1M1119.500 701.500h4M1119.500 712h4' />
					<rect x='1136' y='701' width='3.500' height='7' rx='1.500' fill='#eee' />
					<path d='M1134.500 706q.5 4 3.300 4t3.300-4M1137.800 710v2' />
					<path d='M1152 702.500h7v6h-7zM1153 711.500h5M1149 702v3.500h2M1149 705v5' />
					<path d='M1164.500 705.500h2l2-2.500v7.500l-2-2.500h-2zM1170.500 704.500q1.500 2 0 4.500M1172.500 703q2.500 3.500 0 7.500M1174.500 702q3 4.500 0 9.500' />
				</svg>
				<Language>ENG</Language>
				<Clock>
					10:00
					<br />
					25/5/2567
				</Clock>
				<svg width='12' height='12' fill='none' stroke='#ddd'>
					<path d='M0.500 1h11v8.500H7.500L6 11.300 4.500 9.500h-4z' />
				</svg>
			</Tray>
		</Taskbar>
	);
}

export default function App() {
	return (
		<Screen>
			<GlobalStyle />
			<TitleBar>
				<XAirMark size={10} />
				X AIR Edit [XR18-5E-F0-18, IP: 192.168.1.74]
				<WindowButtons>
					<svg width='8' height='8' stroke='#222'><path d='M0.500 4.500h7' /></svg>
					<svg width='8' height='8' fill='none' stroke='#222'><path d='M0.500 2.500h4.500v4.500H0.500zM2.500 2V0.500H7V5H5.500' /></svg>
					<svg width='8' height='8' stroke='#222'><path d='M1 1l6 6M7 1L1 7' /></svg>
				</WindowButtons>
			</TitleBar>
			<Mixer>
				<MainArea>
					<TabBar>
						{tabs.map((tab) => (
							<Tab key={tab.name} $width={tab.width} $active={tab.active} $divided={tab.divided}>
								<TabIcon name={tab.name} />
								{tab.name}
							</Tab>
						))}
					</TabBar>
					<Editor>
						<ChannelColumn>
							<ChannelName>Kick Drum</ChannelName>
							<MeterBox $margin='6px 0 0 10px' $height={214}>
								<LevelMeter height={214} top={16} step={12.8} level={161} />
							</MeterBox>
						</ChannelColumn>
						<EqPanel>
							<EqGraph />
							<EqControls />
						</EqPanel>
						<MeterBox $margin='0 0 0 12px' $height={269}>
							<LevelMeter height={269} top={17} step={16.65} level={199.5} />
						</MeterBox>
						<SideTabs>
							<SideTab>PEQ</SideTab>
							<SideFill />
						</SideTabs>
					</Editor>
					<StripRow>
						{strips.map((strip) => <ChannelStrip key={strip.id} strip={strip} />)}
					</StripRow>
				</MainArea>
				<SidePanel />
			</Mixer>
			<WindowsTaskbar />
		</Screen>
	);
}
